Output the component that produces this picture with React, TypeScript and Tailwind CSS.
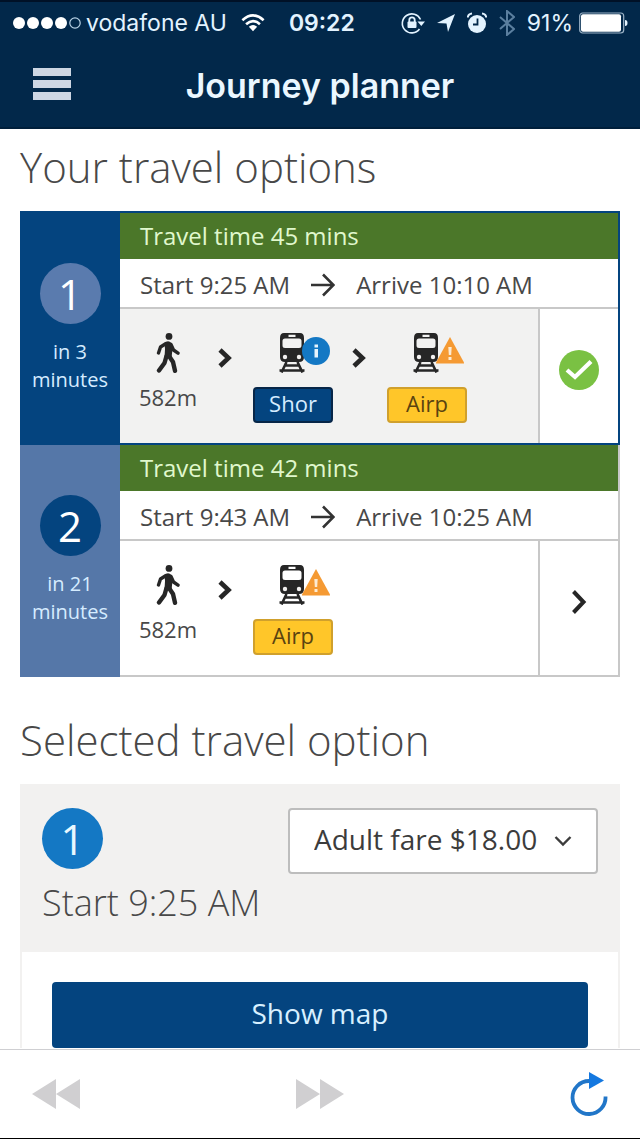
import React from "react";

type Alert = "info" | "warning";
type Leg = { kind: "walk"; distance: string } | { kind: "train"; alert: Alert; line: "Shor" | "Airp" };
type Option = {
  id: number;
  wait: string;
  duration: string;
  start: string;
  arrive: string;
  selected: boolean;
  legs: Leg[];
};

const options: Option[] = [
  {
    id: 1,
    wait: "in 3",
    duration: "45 mins",
    start: "9:25 AM",
    arrive: "10:10 AM",
    selected: true,
    legs: [
      { kind: "walk", distance: "582m" },
      { kind: "train", alert: "info", line: "Shor" },
      { kind: "train", alert: "warning", line: "Airp" },
    ],
  },
  {
    id: 2,
    wait: "in 21",
    duration: "42 mins",
    start: "9:43 AM",
    arrive: "10:25 AM",
    selected: false,
    legs: [
      { kind: "walk", distance: "582m" },
      { kind: "train", alert: "warning", line: "Airp" },
    ],
  },
];

function WalkIcon() {
  return (
    <svg viewBox="0 0 24 40" className="h-10 w-6" fill="none" stroke="#262626" aria-hidden="true">
      <circle cx="13" cy="3.4" r="3.4" fill="#262626" stroke="none" />
      <path d="M8.500 10 Q12 6.500 15.500 10 L16.5 16 L15.5 25 L8.5 25 L9 16 Z" fill="#262626" stroke="none" />
      <path d="M10 10.5 L4.5 14 L2.5 20 M15 11.5 L17.5 17 L22 20.2" strokeWidth="3.4" strokeLinecap="round" strokeLinejoin="round" />
      <path d="M10.5 23 L8.5 30 L3 37.5 M13 23 L17 29 L19 37.8" strokeWidth="4.4" strokeLinecap="round" strokeLinejoin="round" />
    </svg>
  );
}

function TrainIcon() {
  return (
    <svg viewBox="0 0 28 40" className="h-10 w-7" aria-hidden="true">
      <path
        fillRule="evenodd"
        fill="#262626"
        d="M6 0 H22 Q26 0 26 5 V24 Q26 29 21 29 H7 Q2 29 2 24 V5 Q2 0 6 0 Z M10.5 1.8 V4 H17.5 V1.8 Z M7 5.5 Q4.5 5.5 4.5 8 V12.5 Q4.5 15 7 15 H21 Q23.5 15 23.5 12.5 V8 Q23.5 5.5 21 5.5 Z"
      />
      <circle cx="7" cy="24" r="2.2" fill="#f2f1f0" />
      <circle cx="21" cy="24" r="2.2" fill="#f2f1f0" />
      <path d="M8.5 29 L3.5 39.5 M19.5 29 L24.5 39.5 M6.5 32.5 H21.5 M1.5 37.5 H26.5" stroke="#262626" strokeWidth="2.6" fill="none" />
    </svg>
  );
}

function AlertBadge({ alert }: { alert: Alert }) {
  if (alert === "info") {
    return (
      <svg viewBox="0 0 28 28" className="absolute -right-6 top-1 size-7" role="img" aria-label="Information">
        <circle cx="14" cy="14" r="14" fill="#1478c4" />
        <rect x="12.5" y="7.5" width="3.5" height="3" fill="#e8f4fc" />
        <rect x="12.5" y="12" width="3.5" height="8.5" fill="#e8f4fc" />
      </svg>
    );
  }
  return (
    <svg viewBox="0 0 28 28" className="absolute -right-6 top-1 size-7" role="img" aria-label="Warning">
      <path d="M14 0 L28.500 26.5 H-0.500 Z" fill="#f59a33" />
      <path d="M12.3 10 H15.7 L15.2 18 H12.8 Z" fill="#fdebd2" />
      <rect x="12.5" y="20" width="3" height="3" fill="#fdebd2" />
    </svg>
  );
}

function Chevron({ large = false }: { large?: boolean }) {
  if (large) {
    return (
      <svg viewBox="0 0 16 24" className="h-6 w-4" fill="none" stroke="#262626" aria-hidden="true">
        <path d="M2.5 1.5 L12.5 12 L2.5 22.5" strokeWidth="4" />
      </svg>
    );
  }
  return (
    <svg viewBox="0 0 16 20" className="h-5 w-4" fill="none" stroke="#262626" aria-hidden="true">
      <path d="M3 2 L11.5 10 L3 18" strokeWidth="4.6" />
    </svg>
  );
}

function CheckIcon() {
  return (
    <svg viewBox="0 0 40 40" className="size-10" aria-hidden="true">
      <circle cx="20" cy="20" r="20" fill="#7ac143" />
      <path d="M8 20 L16 27 L32 11.5" fill="none" stroke="#fff" strokeWidth="4.2" />
    </svg>
  );
}

function LegItem({ leg }: { leg: Leg }) {
  if (leg.kind === "walk") {
    return (
      <div className="flex w-[74px] flex-col items-center">
        <WalkIcon />
        <span className="mt-2.5 text-[22px] leading-7 text-[#484848]">{leg.distance}</span>
      </div>
    );
  }
  return (
    <div className="mr-1.5 flex w-20 flex-col items-center">
      <div className="relative mr-0.5">
        <TrainIcon />
        <AlertBadge alert={leg.alert} />
      </div>
      <span
        className={
          leg.line === "Shor"
            ? "mt-3.5 flex h-9 w-20 items-center justify-center rounded border-2 border-[#072648] bg-[#04447f] pb-1 text-[22px] leading-7 text-[#d5ecff]"
            : "mt-3.5 flex h-9 w-20 items-center justify-center rounded border-2 border-[#d0a02c] bg-[#ffc629] pb-1 text-[22px] leading-7 text-[#5a4310]"
        }
      >
        {leg.line}
      </span>
    </div>
  );
}

function OptionCard({ option }: { option: Option }) {
  const { selected } = option;
  return (
    <li className={selected ? "flex border-r-2 border-t-2 border-[#04447f]" : "flex border-r-2 border-[#c8c8c8]"}>
      <div
        className={
          selected
            ? "flex w-[100px] shrink-0 flex-col items-center bg-[#04447f] pt-[50px] text-xl leading-7 text-[#d5ecff]"
            : "flex w-[100px] shrink-0 flex-col items-center bg-[#5577a8] pt-[50px] text-xl leading-7 text-[#d5ecff]"
        }
      >
        <span
          className={
            selected
              ? "mb-3.5 flex size-[61px] items-center justify-center rounded-full bg-[#5a7bae] text-[42px] leading-none text-white"
              : "mb-3.5 flex size-[61px] items-center justify-center rounded-full bg-[#04447f] text-[42px] leading-none text-white"
          }
        >
          {option.id}
        </span>
        <span>{option.wait}</span>
        <span>minutes</span>
      </div>
      <div className={selected ? "min-w-0 flex-1 border-b-2 border-[#04447f]" : "min-w-0 flex-1 border-b-2 border-[#c8c8c8]"}>
        <h3 className="flex h-[46px] items-center bg-[#4b7729] px-5 text-2xl leading-8 text-[#e0f8cd]">
          Travel time {option.duration}
        </h3>
        <div className="flex h-[50px] items-center border-b-2 border-[#c8c8c8] px-5 pt-1 text-2xl leading-8 text-[#484848]">
          <span>Start {option.start}</span>
          <svg viewBox="0 0 24 24" className="mx-[21px] size-6" fill="none" stroke="#333" strokeWidth="2.6" role="img" aria-label="to">
            <path d="M0 12 H22 M12 1.5 L22.5 12 L12 22.5" />
          </svg>
          <span>Arrive {option.arrive}</span>
        </div>
        <div className="flex h-[134px]">
          <div
            className={
              selected
                ? "flex flex-1 items-start bg-[#f2f2f1] pl-[11px] pt-6"
                : "flex flex-1 items-start bg-white pl-[11px] pt-6"
            }
          >
            {option.legs.map((leg, index) => (
              <React.Fragment key={index}>
                {index > 0 && (
                  <div className="flex h-[50px] w-12 items-center justify-center pr-2">
                    <Chevron />
                  </div>
                )}
                <LegItem leg={leg} />
              </React.Fragment>
            ))}
          </div>
          <button
            type="button"
            aria-label={`Travel option ${option.id}`}
            aria-pressed={selected}
            className="flex w-20 items-center justify-center border-l-2 border-[#c8c8c8] bg-white pb-3"
          >
            {selected ? <CheckIcon /> : <Chevron large />}
          </button>
        </div>
      </div>
    </li>
  );
}

function StatusBar() {
  return (
    <div className="flex h-11 items-center border-t-2 border-[#001127] px-3 font-['Inter',sans-serif] text-[23px] leading-7 text-[#e3f3ff]">
      <svg viewBox="0 0 70 14" className="h-3.5 w-[70px]" role="img" aria-label="Signal strength">
        <g fill="#fff">
          <circle cx="7" cy="7" r="6" />
          <circle cx="21" cy="7" r="6" />
          <circle cx="35" cy="7" r="6" />
          <circle cx="49" cy="7" r="6" />
        </g>
        <circle cx="63" cy="7" r="5.2" fill="none" stroke="#b9d3e6" strokeWidth="1.2" />
      </svg>
      <span className="ml-1">vodafone AU</span>
      <svg viewBox="0 0 26 20" className="ml-3.5 h-5 w-6" fill="none" stroke="#fff" strokeWidth="2.8" role="img" aria-label="Wi-Fi">
        <path d="M1.5 7 Q13 -3.5 24.5 7 M5.5 11.3 Q13 4.5 20.5 11.3" />
        <path d="M8.5 14 Q13 10.5 17.5 14 L13 19 Z" fill="#fff" stroke="none" />
      </svg>
      <span className="ml-6 font-semibold">09:22</span>
      <div className="ml-auto flex items-center gap-3">
        <svg viewBox="0 0 24 22" className="h-[22px] w-6" role="img" aria-label="Rotation lock">
          <path d="M19.5 7.5 A9.5 9.5 0 1 0 18.5 17" fill="none" stroke="#e3f3ff" strokeWidth="1.6" />
          <path d="M16.5 9.5 H24 L20.3 14 Z" fill="#e3f3ff" />
          <rect x="6.5" y="9.5" width="9" height="6.5" rx="1" fill="#e3f3ff" />
          <path d="M8.3 10 V8 A2.700 2.700 0 0 1 13.700 8 V10" fill="none" stroke="#e3f3ff" strokeWidth="1.8" />
        </svg>
        <svg viewBox="0 0 18 20" className="h-5 w-[18px]" fill="#e3f3ff" role="img" aria-label="Location">
          <path d="M18 1 L11 19 L9.5 10.5 L0 10 Z" />
        </svg>
        <svg viewBox="0 0 20 22" className="h-[22px] w-5" role="img" aria-label="Alarm">
          <circle cx="10" cy="12" r="9" fill="#e3f3ff" />
          <path d="M0.8 5.5 Q1 2 5 1.5 M19.2 5.5 Q19 2 15 1.5" stroke="#e3f3ff" strokeWidth="2" fill="none" />
          <path d="M10.5 6.5 V12.5 H6" stroke="#02284a" strokeWidth="1.8" fill="none" />
        </svg>
        <svg viewBox="0 0 16 26" className="h-[26px] w-4" fill="none" stroke="#5b7f9f" strokeWidth="2" role="img" aria-label="Bluetooth">
          <path d="M1 7 L15 19 L8 25 V1 L15 7 L1 19" />
        </svg>
        <span>91%</span>
        <svg viewBox="0 0 49 22" className="-ml-1.5 h-[22px] w-[49px]" role="img" aria-label="Battery">
          <rect x="0.7" y="1" width="44" height="20" rx="3" fill="none" stroke="#9bb2c6" strokeWidth="1.2" />
          <rect x="2" y="2.2" width="40" height="17.6" rx="2" fill="#fff" />
          <path d="M46 8 Q48.5 8 48.5 11 Q48.5 14 46 14 Z" fill="#e3f3ff" />
        </svg>
      </div>
    </div>
  );
}

export default function App() {
  return (
    <div className="flex h-screen flex-col overflow-hidden bg-white font-['Open_Sans','Noto_Sans',sans-serif]">
      <header className="shrink-0 border-b-2 border-[#001f3b] bg-[#02284a]">
        <StatusBar />
        <div className="grid h-[83px] grid-cols-[1fr_auto_1fr] items-center px-[33px]">
          <button type="button" aria-label="Menu" className="flex w-[38px] flex-col gap-1 justify-self-start pb-1">
            <span className="h-2 bg-[#cdd6e3]" />
            <span className="h-2 bg-[#cdd6e3]" />
            <span className="h-2 bg-[#cdd6e3]" />
          </button>
          <h1 className="font-['Inter',sans-serif] text-[34px] font-semibold leading-10 text-[#ebf7ff]">Journey planner</h1>
        </div>
      </header>

      <main className="min-h-0 flex-1 overflow-hidden px-5">
        <h2 className="pt-3.5 text-[42px] font-light leading-[48px] text-[#484848]">Your travel options</h2>
        <ul className="mt-5">
          {options.map((option) => (
            <OptionCard key={option.id} option={option} />
          ))}
        </ul>

        <h2 className="mt-[39px] text-[42px] font-light leading-[48px] text-[#484848]">Selected travel option</h2>
        <section className="mt-5 border-x-2 border-[#f2f1f0]">
          <div className="flex h-[168px] items-start justify-between bg-[#f2f1f0] px-5 pt-6">
            <div>
              <span className="flex size-[61px] items-center justify-center rounded-full bg-[#1478c4] text-[42px] leading-none text-[#e8f8ff]">
                1
              </span>
              <p className="mt-2.5 text-[36px] font-light leading-[48px] text-[#484848]">Start 9:25 AM</p>
            </div>
            <div className="relative">
              <select
                aria-label="Fare"
                defaultValue="adult"
                className="h-[66px] appearance-none rounded border-2 border-[#bdbdbd] bg-white pb-1 pl-6 pr-[58px] text-[28px] leading-9 text-[#3c3c3c]"
              >
                <option value="adult">Adult fare $18.00</option>
              </select>
              <svg
                viewBox="0 0 18 12"
                className="pointer-events-none absolute right-[26px] top-[27px] h-3 w-[18px]"
                fill="none"
                stroke="#3c3c3c"
                strokeWidth="2.4"
                aria-hidden="true"
              >
                <path d="M1.5 2 L9 9.5 L16.5 2" />
              </svg>
            </div>
          </div>
          <div className="px-[30px] pt-[30px]">
            <button type="button" className="h-[66px] w-full rounded bg-[#04447f] pb-1 text-[28px] leading-9 text-[#d8f0ff]">
              Show map
            </button>
          </div>
        </section>
      </main>

      <footer className="grid h-[90px] shrink-0 grid-cols-3 items-center border-b border-t border-b-black border-t-[#cfcfd2] bg-white px-8">
        <button type="button" aria-label="Back" className="justify-self-start">
          <svg viewBox="0 0 48 30" className="h-[30px] w-12" fill="#d0cfd1">
            <path d="M24 0 V30 L0 15 Z M48 0 V30 L24 15 Z" />
          </svg>
        </button>
        <button type="button" aria-label="Forward" className="justify-self-center">
          <svg viewBox="0 0 48 30" className="h-[30px] w-12" fill="#d0cfd1">
            <path d="M0 0 V30 L24 15 Z M24 0 V30 L48 15 Z" />
          </svg>
        </button>
        <button type="button" aria-label="Reload" className="justify-self-end">
          <svg viewBox="0 0 38 44" className="h-11 w-[38px]">
            <path d="M19 9 A16.5 16.5 0 1 0 35.5 24.5" fill="none" stroke="#2176c8" strokeWidth="3.8" />
            <path d="M19 0 L34 8.5 L19 17 Z" fill="#1478e0" />
          </svg>
        </button>
      </footer>
    </div>
  );
}
